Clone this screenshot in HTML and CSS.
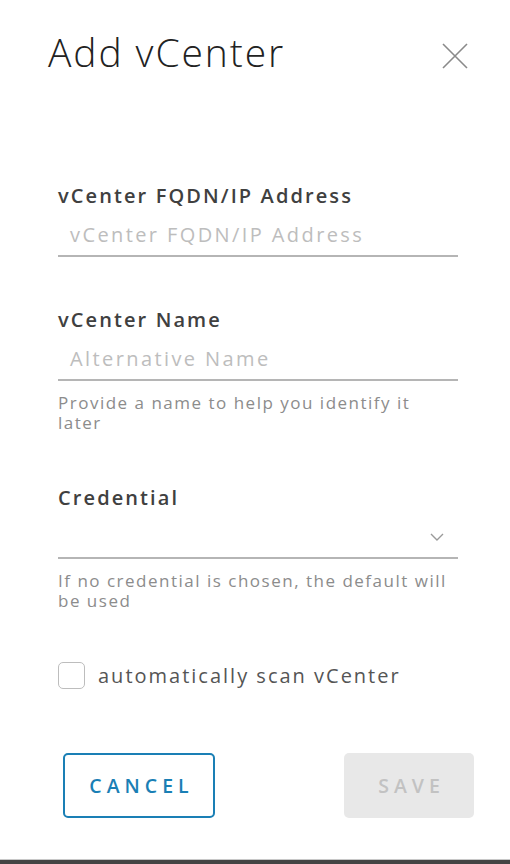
FILE: index.html
```html
<!DOCTYPE html>
<html>
<head>
<meta charset="utf-8">
<link rel="stylesheet" href="styles.css">
</head>
<body>
<div class="modal">
  <div class="header">
    <h1 class="title">Add vCenter</h1>
    <button class="close" aria-label="Close">
      <svg width="26" height="26" viewBox="0 0 26 26"><path d="M1 1 L25 25 M25 1 L1 25" stroke="#8a8a8a" stroke-width="1.6" fill="none"/></svg>
    </button>
  </div>
  <div class="form">
    <div class="field">
      <label class="label">vCenter FQDN/IP Address</label>
      <div class="input"><span class="placeholder">vCenter FQDN/IP Address</span></div>
    </div>
    <div class="field field-name">
      <label class="label">vCenter Name</label>
      <div class="input"><span class="placeholder">Alternative Name</span></div>
      <div class="helper">Provide a name to help you identify it later</div>
    </div>
    <div class="field">
      <label class="label">Credential</label>
      <div class="input select">
        <svg class="chev" width="14" height="8" viewBox="0 0 14 8"><path d="M1 1 L7 7 L13 1" stroke="#9a9a9a" stroke-width="1.4" fill="none"/></svg>
      </div>
      <div class="helper">If no credential is chosen, the default will be used</div>
    </div>
    <div class="check">
      <span class="box"></span>
      <span class="check-label">automatically scan vCenter</span>
    </div>
  </div>
  <div class="footer">
    <button class="btn btn-outline">CANCEL</button>
    <button class="btn btn-disabled">SAVE</button>
  </div>
</div>
<div class="bottombar"></div>
</body>
</html>
```
FILE: styles.css
```css
html, body {
  margin: 0;
  padding: 0;
  background: #fff;
}
body {
  width: 510px;
  height: 864px;
  position: relative;
  overflow: hidden;
  font-family: "Open Sans", "Liberation Sans", sans-serif;
}
.modal {
  display: flex;
  flex-direction: column;
}
.header {
  display: flex;
  justify-content: space-between;
  align-items: flex-start;
  padding: 26px 42px 0 48px;
}
.title {
  margin: 0;
  font-size: 39px;
  font-weight: 300;
  color: #222;
  line-height: 52px;
  letter-spacing: 1.9px;
}
.close {
  border: 0;
  background: none;
  padding: 0;
  margin-top: 17px;
  width: 26px;
  height: 26px;
}
.form {
  display: flex;
  flex-direction: column;
  padding: 0 52px 0 58px;
  margin-top: 104px;
}
.field {
  display: flex;
  flex-direction: column;
  margin-bottom: 49px;
}
.field-name {
  margin-bottom: 51px;
}
.label {
  font-size: 20px;
  font-weight: 600;
  color: #404040;
  line-height: 28px;
  letter-spacing: 2.1px;
}
.input {
  height: 47px;
  border-bottom: 2px solid #b5b5b5;
  display: flex;
  align-items: center;
  padding-left: 12px;
  box-sizing: border-box;
}
.placeholder {
  font-size: 20px;
  color: #bdbdbd;
  margin-top: 4px;
  letter-spacing: 2.4px;
  white-space: nowrap;
}
.select {
  justify-content: flex-end;
  padding-right: 14px;
}
.chev { margin-top: 4px; }
.helper {
  margin-top: 12px;
  font-size: 17px;
  line-height: 20px;
  color: #8c8c8c;
  letter-spacing: 1.5px;
}
.check {
  display: flex;
  align-items: center;
  gap: 13px;
  margin-top: 2px;
}
.box {
  width: 25px;
  height: 25px;
  border: 1.5px solid #bdbdbd;
  border-radius: 5px;
}
.check-label {
  font-size: 20px;
  color: #555;
  letter-spacing: 2px;
}
.footer {
  display: flex;
  justify-content: space-between;
  padding: 0 36px 0 63px;
  margin-top: 64px;
}
.btn {
  height: 65px;
  border-radius: 5px;
  font-family: inherit;
  font-size: 19.5px;
  font-weight: 600;
  letter-spacing: 5px;
  padding: 0 0 0 5px;
}
.btn-outline {
  width: 152px;
  background: #fff;
  border: 2px solid #1a7fb5;
  color: #1a7fb5;
}
.btn-disabled {
  width: 130px;
  background: #e8e8e8;
  border: 0;
  color: #c2c2c2;
}
.bottombar {
  position: absolute;
  left: 0;
  right: 0;
  bottom: 0;
  height: 4px;
  background: #444;
  border-top: 1px solid #c8c8c8;
}
```
